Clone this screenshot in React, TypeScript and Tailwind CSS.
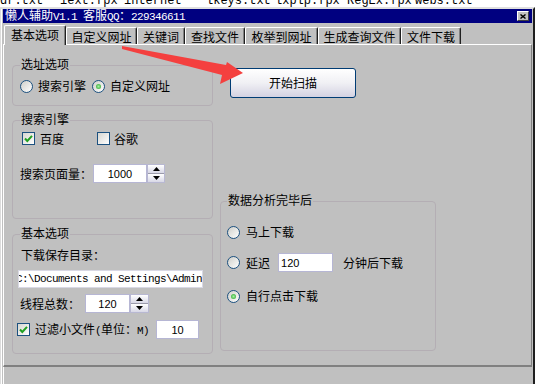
import React from "react";

const monoCls = "font-['Liberation_Mono',monospace] text-[11px] tracking-[-0.6px]";

function M({ children }: { children: React.ReactNode }) {
  return <span className={monoCls}>{children}</span>;
}

function Radio({ checked }: { checked?: boolean }) {
  return (
    <span className="w-[13px] h-[13px] shrink-0 rounded-full border border-[#1c5180] bg-linear-to-br from-[#cfcfca] to-white flex items-center justify-center">
      {checked && (
        <span className="w-[5px] h-[5px] rounded-full bg-[radial-gradient(circle,#a4f0a4_0%,#1f9f1f_100%)]" />
      )}
    </span>
  );
}

function Check({ checked }: { checked?: boolean }) {
  return (
    <span className="w-[13px] h-[13px] shrink-0 border border-[#1c5180] bg-linear-to-br from-[#d6d6d1] to-white flex items-center justify-center">
      {checked && (
        <svg width="11" height="11" viewBox="0 0 11 11">
          <path d="M2 5.5 L4.3 8 L9 2.8" fill="none" stroke="#21a121" strokeWidth="2" />
        </svg>
      )}
    </span>
  );
}

function Spin({ className }: { className: string }) {
  return (
    <span className={`flex flex-col shrink-0 border border-[#b8b8d2] bg-[#9a9aaa] gap-[1px] ${className}`}>
      <span className="flex-1 flex items-center justify-center bg-linear-to-b from-white to-[#d8d8e6]">
        <svg width="7" height="4" viewBox="0 0 7 4">
          <path d="M0 4 L3.5 0 L7 4 Z" fill="#000" />
        </svg>
      </span>
      <span className="flex-1 flex items-center justify-center bg-linear-to-b from-white to-[#d8d8e6]">
        <svg width="7" height="4" viewBox="0 0 7 4">
          <path d="M0 0 L7 0 L3.5 4 Z" fill="#000" />
        </svg>
      </span>
    </span>
  );
}

function Group({
  label,
  className,
  legendClass,
  children,
}: {
  label: string;
  className: string;
  legendClass?: string;
  children: React.ReactNode;
}) {
  return (
    <div className={`relative border border-[#b4aeb4] rounded-[4px] ${className}`}>
      <span className={`absolute -top-[9px] ${legendClass ?? "left-[7px]"} px-[1px] bg-[#c0c0c0] leading-[14px] whitespace-nowrap`}>
        {label}
      </span>
      {children}
    </div>
  );
}

const tabs: { label: string; w: string }[] = [
  { label: "基本选项", w: "w-[62px]" },
  { label: "自定义网址", w: "w-[71px]" },
  { label: "关键词", w: "w-[48px]" },
  { label: "查找文件", w: "w-[60px]" },
  { label: "枚举到网址", w: "w-[73px]" },
  { label: "生成查询文件", w: "w-[83px]" },
  { label: "文件下载", w: "w-[60px]" },
];

const inputCls =
  "bg-white border border-[#b6b6d4] flex items-center justify-center font-['Liberation_Sans',sans-serif] text-[11px] leading-[14px] shrink-0";

export default function App() {
  return (
    <div className="w-[538px] h-[384px] bg-white relative overflow-hidden text-[12px] text-black font-['Noto_Sans_CJK_SC',sans-serif]">
      {/* background file names, mostly hidden behind the window */}
      <div className="h-[7px] overflow-hidden whitespace-nowrap font-['Liberation_Mono',monospace] text-[12px] leading-[12px]">
        <div className="-mt-[5px] flex">
          <span className="w-[60px] shrink-0">dr.txt</span>
          <span className="w-[64px] shrink-0">iext.fpx</span>
          <span className="w-[82px] shrink-0">internet</span>
          <span className="w-[69px] shrink-0">lkeys.txt</span>
          <span className="w-[72px] shrink-0">lxplp.fpx</span>
          <span className="w-[68px] shrink-0">RegEx.fpx</span>
          <span className="shrink-0">webs.txt</span>
        </div>
      </div>

      {/* window */}
      <div className="w-[535px] h-[377px] flex flex-col bg-[#c0c0c0] border-l border-l-[#dcdcdc] border-t-2 border-t-[#dfdfdf] border-r-2 border-r-[#1e1e1e]">
        <div className="flex-1 flex flex-col border-l border-l-white pl-[1px] pr-[1px]">
          {/* title bar */}
          <div className="h-[14px] bg-[#000080] flex items-center justify-between pl-[2px] pr-[3px] text-white leading-[14px] whitespace-nowrap">
            <span>
              懒人辅助<M>V1.1 </M>客服<M>QQ</M>：<M>229346611</M>
            </span>
            <span className="w-[12px] h-[10px] bg-[#c0c0c0] border-t border-l border-t-white border-l-white border-r border-b border-r-[#404040] border-b-[#404040] flex items-center justify-center">
              <svg width="6" height="5" viewBox="0 0 6 5">
                <path d="M0.5 0.5 L5.5 4.5 M5.5 0.5 L0.5 4.5" stroke="#000" strokeWidth="1.4" />
              </svg>
            </span>
          </div>

          {/* tabs */}
          <div className="h-[21px] flex items-end pl-[1px]">
            {tabs.map((t, i) =>
              i === 0 ? (
                <div
                  key={t.label}
                  className={`${t.w} h-[20px] -mb-[1px] relative z-10 bg-[#c0c0c0] rounded-t-[2px] border-t border-l border-t-white border-l-white border-r border-r-[#202020] shadow-[inset_-1px_0_0_#808080] flex items-center justify-center leading-[14px] pb-[1px] whitespace-nowrap`}
                >
                  {t.label}
                </div>
              ) : (
                <div
                  key={t.label}
                  className={`${t.w} h-[17px] rounded-t-[2px] border-t border-l border-t-white border-l-white border-r border-r-[#202020] shadow-[inset_-1px_0_0_#808080] flex items-center justify-center leading-[14px] pt-[2px] whitespace-nowrap`}
                >
                  {t.label}
                </div>
              )
            )}
          </div>

          {/* panel */}
          <div className="h-[323px] flex border-t border-t-white border-l border-l-white border-r border-r-[#808080] border-b-2 border-b-[#808080]">
            {/* left column */}
            <div className="ml-[8px] mt-[20px] w-[201px] flex flex-col">
              <Group label="选址选项" className="h-[41px] pt-[13px] pl-[7px]">
                <div className="flex items-center leading-[14px] whitespace-nowrap">
                  <Radio />
                  <span className="ml-[5px]">搜索引擎</span>
                  <span className="ml-[6px]">
                    <Radio checked />
                  </span>
                  <span className="ml-[5px]">自定义网址</span>
                </div>
              </Group>

              <Group label="搜索引擎" className="mt-[14px] h-[99px] pt-[11px] pl-[7px]">
                <div className="flex items-center h-[13px] ml-[2px] leading-[14px]">
                  <Check checked />
                  <span className="ml-[5px] w-[24px]">百度</span>
                  <span className="ml-[33px]">
                    <Check />
                  </span>
                  <span className="ml-[4px]">谷歌</span>
                </div>
                <div className="mt-[19px] flex items-center leading-[14px] whitespace-nowrap">
                  <span className="w-[72px]">搜索页面量：</span>
                  <span className={`${inputCls} ml-[1px] w-[54px] h-[19px]`}>1000</span>
                  <Spin className="w-[18px] h-[19px]" />
                </div>
              </Group>

              <Group label="基本选项" className="mt-[15px] h-[120px] pt-[13px] pl-[5px]">
                <div className="ml-[3px] leading-[14px]">下载保存目录：</div>
                <div className="mt-[8px] w-[185px] h-[18px] bg-white border border-[#d8d8e4] overflow-hidden whitespace-nowrap flex items-center">
                  <span className={`${monoCls} -ml-[3px] leading-[14px]`}>
                    {"C:\\Documents and Settings\\Administrator"}
                  </span>
                </div>
                <div className="mt-[6px] ml-[2px] flex items-center leading-[14px] whitespace-nowrap">
                  <span className="w-[60px]">线程总数：</span>
                  <span className={`${inputCls} ml-[5px] w-[45px] h-[19px]`}>120</span>
                  <Spin className="w-[19px] h-[19px]" />
                </div>
                <div className="mt-[7px] -ml-[1px] flex items-center leading-[14px] whitespace-nowrap">
                  <Check checked />
                  <span className="ml-[5px]">
                    过滤小文件<M>(</M>单位：<M>M)</M>
                  </span>
                  <span className={`${inputCls} ml-[7px] w-[43px] h-[19px]`}>10</span>
                </div>
              </Group>
            </div>

            {/* right column */}
            <div className="ml-[7px] w-[216px] flex flex-col">
              <div className="mt-[23px] ml-[10px] w-[126px] h-[30px] rounded-[3px] border border-[#003c74] bg-linear-to-b from-white via-[#f0f0f4] to-[#d4d2e2] flex items-center justify-center leading-[14px]">
                开始扫描
              </div>

              <Group label="数据分析完毕后" legendClass="left-[6px]" className="mt-[103px] h-[150px] pt-[23px] pl-[6px]">
                <div className="flex items-center leading-[14px] whitespace-nowrap">
                  <Radio />
                  <span className="ml-[6px]">马上下载</span>
                </div>
                <div className="mt-[14px] h-[19px] flex items-center leading-[14px] whitespace-nowrap">
                  <Radio />
                  <span className="ml-[6px]">延迟</span>
                  <span className={`${inputCls} ml-[8px] w-[55px] h-[19px] !justify-start pl-[2px]`}>120</span>
                  <span className="ml-[10px]">分钟后下载</span>
                </div>
                <div className="mt-[17px] flex items-center leading-[14px] whitespace-nowrap">
                  <Radio checked />
                  <span className="ml-[6px]">自行点击下载</span>
                </div>
              </Group>
            </div>
          </div>

          {/* bottom strip */}
          <div className="flex-1 border-l border-l-white" />
        </div>
      </div>

      {/* red annotation arrow */}
      <svg className="absolute left-0 top-0 pointer-events-none" width="538" height="384" viewBox="0 0 538 384">
        <polygon
          points="122,46 226,65 227,62 243,73 220,84 222,75 122,49"
          fill="#f4403f"
        />
      </svg>
    </div>
  );
}
